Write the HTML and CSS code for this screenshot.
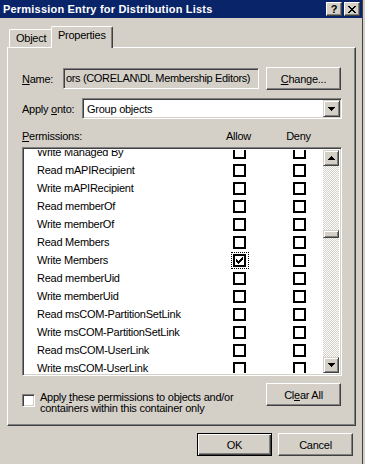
FILE: index.html
```html
<!DOCTYPE html>
<html lang="en">
<head>
    <meta charset="UTF-8">
    <title>Permission Entry for Distribution Lists</title>
    <link rel="stylesheet" href="styles.css">
</head>
<body>
<div class="window">
    <div class="titlebar">
        <span class="title">Permission Entry for Distribution Lists</span>
        <div class="caption-buttons">
            <span class="cap-btn">?</span>
            <span class="cap-btn">
                <svg width="8" height="7" viewBox="0 0 8 7" shape-rendering="crispEdges"><path d="M0 0h2v1h1v1h2v-1h1v-1h2v1h-1v1h-1v1h-1v1h1v1h1v1h1v1h-2v-1h-1v-1h-2v1h-1v1h-2v-1h1v-1h1v-1h1v-1h-1v-1h-1v-1h-1z" fill="#000"/></svg>
            </span>
        </div>
    </div>

    <div class="tabs">
        <div class="tab">Object</div>
        <div class="tab active">Properties</div>
    </div>

    <div class="panel">
        <div class="name-row">
            <span class="lbl name-lbl"><u>N</u>ame:</span>
            <div class="textbox">ors (CORELAN\DL Membership Editors)</div>
            <button class="btn"><u>C</u>hange...</button>
        </div>

        <div class="apply-row">
            <span class="lbl apply-lbl">Apply <u>o</u>nto:</span>
            <div class="combo">
                <span class="combo-text">Group objects</span>
                <span class="combo-btn">
                    <svg width="7" height="4" viewBox="0 0 7 4" shape-rendering="crispEdges"><path d="M0 0h7v1h-1v1h-1v1h-1v1h-1v-1h-1v-1h-1v-1h-1z" fill="#000"/></svg>
                </span>
            </div>
        </div>

        <div class="perm-head">
            <span class="perm-lbl"><u>P</u>ermissions:</span>
            <span class="col-head allow-head">Allow</span>
            <span class="col-head deny-head">Deny</span>
        </div>

        <div class="list">
            <div class="rows">
                <div class="row"><span class="name">Write Managed By</span><span class="chk"></span><span class="chk"></span></div>
                <div class="row"><span class="name">Read mAPIRecipient</span><span class="chk"></span><span class="chk"></span></div>
                <div class="row"><span class="name">Write mAPIRecipient</span><span class="chk"></span><span class="chk"></span></div>
                <div class="row"><span class="name">Read memberOf</span><span class="chk"></span><span class="chk"></span></div>
                <div class="row"><span class="name">Write memberOf</span><span class="chk"></span><span class="chk"></span></div>
                <div class="row"><span class="name">Read Members</span><span class="chk"></span><span class="chk"></span></div>
                <div class="row">
                    <span class="name">Write Members</span>
                    <span class="focus">
                        <span class="chk">
                            <svg width="7" height="7" viewBox="0 0 7 7" shape-rendering="crispEdges"><path d="M0 2h1v3h-1zM1 3h1v3h-1zM2 4h1v3h-1zM3 3h1v3h-1zM4 2h1v3h-1zM5 1h1v3h-1zM6 0h1v3h-1z" fill="#000"/></svg>
                        </span>
                    </span>
                    <span class="chk"></span>
                </div>
                <div class="row"><span class="name">Read memberUid</span><span class="chk"></span><span class="chk"></span></div>
                <div class="row"><span class="name">Write memberUid</span><span class="chk"></span><span class="chk"></span></div>
                <div class="row"><span class="name">Read msCOM-PartitionSetLink</span><span class="chk"></span><span class="chk"></span></div>
                <div class="row"><span class="name">Write msCOM-PartitionSetLink</span><span class="chk"></span><span class="chk"></span></div>
                <div class="row"><span class="name">Read msCOM-UserLink</span><span class="chk"></span><span class="chk"></span></div>
                <div class="row"><span class="name">Write msCOM-UserLink</span><span class="chk"></span><span class="chk"></span></div>
            </div>
            <div class="scrollbar">
                <span class="sb-btn">
                    <svg width="7" height="4" viewBox="0 0 7 4" shape-rendering="crispEdges"><path d="M3 0h1v1h1v1h1v1h1v1h-7v-1h1v-1h1v-1h1z" fill="#000"/></svg>
                </span>
                <div class="track"><span class="thumb"></span></div>
                <span class="sb-btn">
                    <svg width="7" height="4" viewBox="0 0 7 4" shape-rendering="crispEdges"><path d="M0 0h7v1h-1v1h-1v1h-1v1h-1v-1h-1v-1h-1v-1h-1z" fill="#000"/></svg>
                </span>
            </div>
        </div>

        <div class="bottom-row">
            <div class="inherit">
                <span class="chk3d"></span>
                <span class="inherit-text">Apply <u>t</u>hese permissions to objects and/or<br>containers within this container only</span>
            </div>
            <button class="btn">Cl<u>e</u>ar All</button>
        </div>
    </div>

    <div class="footer">
        <button class="btn default">OK</button>
        <button class="btn">Cancel</button>
    </div>
</div>
</body>
</html>
```

FILE: styles.css
```css
* {
    box-sizing: border-box;
}
body {
    margin: 0;
    background-color: #d4d0c8;
    font-family: "Liberation Sans", Arial, sans-serif;
    font-size: 11px;
    letter-spacing: -0.25px;
    color: #000;
}
u {
    text-decoration-thickness: 1px;
    text-underline-offset: 1px;
}
.window {
    width: 363px;
    height: 464px;
    border-right: 1px solid #404040;
}

/* title bar */
.titlebar {
    height: 18px;
    width: 362px;
    background-color: #0a246a;
    display: flex;
    align-items: center;
    justify-content: space-between;
    padding: 0 2px 0 3px;
}
.title {
    color: #fff;
    font-weight: bold;
    font-size: 11px;
    letter-spacing: 0.2px;
    line-height: 18px;
}
.caption-buttons {
    display: flex;
    gap: 2px;
}
.cap-btn {
    width: 16px;
    height: 14px;
    background-color: #d4d0c8;
    border: 1px solid;
    border-color: #fff #404040 #404040 #fff;
    box-shadow: inset -1px -1px #808080;
    display: flex;
    align-items: center;
    justify-content: center;
    font-weight: bold;
    font-size: 11px;
    line-height: 12px;
}

/* tabs */
.tabs {
    display: flex;
    align-items: flex-end;
    height: 21px;
    margin-top: 8px;
    padding-left: 9px;
}
.tab {
    height: 18px;
    width: 42px;
    padding-left: 6px;
    line-height: 17px;
    border-top: 1px solid #fff;
    border-left: 1px solid #fff;
    border-top-left-radius: 2px;
}
.tab.active {
    position: relative;
    z-index: 1;
    width: 62px;
    height: 22px;
    margin-bottom: -1px;
    line-height: 17px;
    background-color: #d4d0c8;
    border-right: 1px solid #404040;
    border-top-right-radius: 2px;
    box-shadow: inset -1px 0 #808080;
}

/* main panel */
.panel {
    margin-left: 7px;
    width: 349px;
    height: 379px;
    border: 1px solid;
    border-color: #fff #404040 #404040 #fff;
    box-shadow: inset -1px -1px #808080;
    padding: 19px 0 0 14px;
}
.lbl {
    white-space: nowrap;
}
.name-row {
    display: flex;
    align-items: center;
    height: 23px;
}
.name-lbl {
    width: 41px;
}
.textbox {
    width: 196px;
    height: 21px;
    margin-right: 7px;
    border: 1px solid;
    border-color: #808080 #fff #fff #808080;
    box-shadow: inset 1px 1px #404040, inset -1px -1px #d4d0c8;
    padding: 0 0 0 2px;
    line-height: 19px;
    letter-spacing: -0.35px;
    white-space: nowrap;
    overflow: hidden;
}
.btn {
    width: 75px;
    height: 23px;
    background-color: #d4d0c8;
    border: 1px solid;
    border-color: #fff #404040 #404040 #fff;
    box-shadow: inset -1px -1px #808080;
    font-family: "Liberation Sans", Arial, sans-serif;
    font-size: 11px;
    letter-spacing: -0.25px;
    color: #000;
    padding: 0;
}
.btn.default {
    border-color: #000;
    box-shadow: inset 1px 1px #fff, inset -1px -1px #404040, inset -2px -2px #808080;
}

.apply-row {
    display: flex;
    align-items: center;
    margin-top: 8px;
    height: 21px;
}
.apply-lbl {
    width: 60px;
}
.combo {
    width: 260px;
    height: 21px;
    background-color: #fff;
    border: 1px solid;
    border-color: #808080 #fff #fff #808080;
    box-shadow: inset 1px 1px #404040, inset -1px -1px #d4d0c8;
    padding: 2px;
    display: flex;
    align-items: center;
    justify-content: space-between;
}
.combo-text {
    padding-left: 2px;
}
.combo-btn {
    width: 17px;
    height: 17px;
    margin-right: -1px;
    background-color: #d4d0c8;
    border: 1px solid;
    border-color: #d4d0c8 #404040 #404040 #d4d0c8;
    box-shadow: inset 1px 1px #fff, inset -1px -1px #808080;
    display: flex;
    align-items: center;
    justify-content: center;
}

/* permission list */
.perm-head {
    display: grid;
    grid-template-columns: 210px 13px 47px 13px;
    margin-top: 11px;
    height: 13px;
    line-height: 13px;
}
.col-head {
    display: flex;
    justify-content: center;
    white-space: nowrap;
}
.allow-head {
    grid-column: 2;
}
.deny-head {
    grid-column: 4;
}
.list {
    margin-top: 4px;
    width: 320px;
    height: 229px;
    border: 1px solid;
    border-color: #808080 #fff #fff #808080;
    box-shadow: inset 1px 1px #404040, inset -1px -1px #d4d0c8;
    padding: 2px;
    display: flex;
    background-color: #fff;
}
.rows {
    width: 300px;
    overflow: hidden;
}
.row {
    display: grid;
    grid-template-columns: 208px 60px 32px;
    align-items: center;
    height: 18px;
}
.row:first-child {
    margin-top: -7px;
}
.name {
    padding-left: 12px;
    white-space: nowrap;
}
.chk {
    width: 13px;
    height: 13px;
    border: 2px solid #000;
    background-color: #fff;
    display: flex;
    align-items: center;
    justify-content: center;
}
.focus {
    width: 18px;
    height: 17px;
    margin-left: -2px;
    border: 1px dotted #000;
    padding: 1px;
}
.scrollbar {
    width: 16px;
    display: flex;
    flex-direction: column;
}
.sb-btn {
    width: 16px;
    height: 16px;
    background-color: #d4d0c8;
    border: 1px solid;
    border-color: #d4d0c8 #404040 #404040 #d4d0c8;
    box-shadow: inset 1px 1px #fff, inset -1px -1px #808080;
    display: flex;
    align-items: center;
    justify-content: center;
}
.track {
    flex: 1;
    background-color: #d4d0c8;
    background-image: repeating-conic-gradient(#fff 0 25%, #d4d0c8 0 50%);
    background-size: 2px 2px;
    padding-top: 64px;
}
.thumb {
    display: block;
    height: 8px;
    background-color: #d4d0c8;
    border: 1px solid;
    border-color: #d4d0c8 #404040 #404040 #d4d0c8;
    box-shadow: inset 1px 1px #fff, inset -1px -1px #808080;
}

/* bottom */
.bottom-row {
    display: flex;
    justify-content: space-between;
    width: 319px;
    margin-top: 7px;
}
.inherit {
    display: flex;
    align-items: flex-start;
    padding-top: 9px;
}
.chk3d {
    width: 13px;
    height: 13px;
    margin-top: 2px;
    margin-right: 5px;
    background-color: #fff;
    border: 1px solid;
    border-color: #808080 #fff #fff #808080;
    box-shadow: inset 1px 1px #404040, inset -1px -1px #d4d0c8;
}
.inherit-text {
    line-height: 11px;
}

/* dialog buttons */
.footer {
    display: flex;
    justify-content: flex-end;
    gap: 6px;
    padding-right: 9px;
    margin-top: 7px;
}
```
